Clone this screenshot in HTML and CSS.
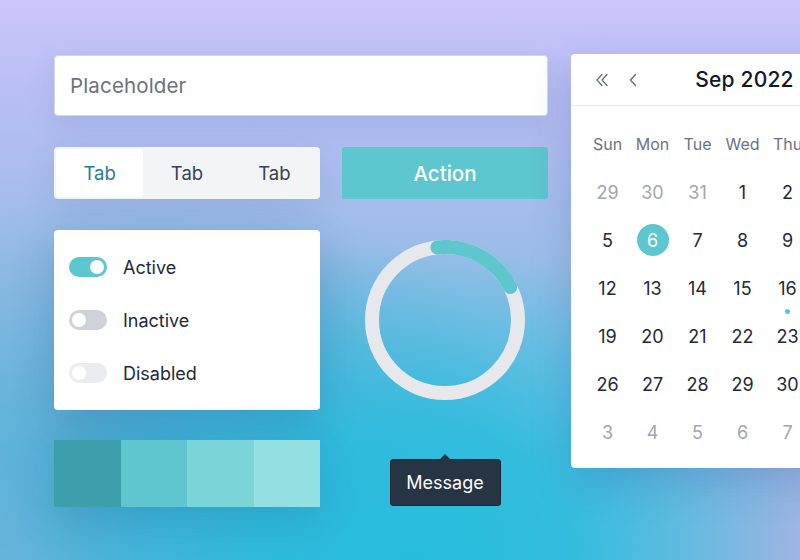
FILE: index.html
```html
<!DOCTYPE html>
<html>
<head>
<meta charset="utf-8">
<link rel="stylesheet" href="styles.css">
</head>
<body>
<div class="stage">
  <div class="left">
    <div class="input"><span class="placeholder">Placeholder</span></div>
    <div class="tabs">
      <div class="tab active">Tab</div>
      <div class="tab">Tab</div>
      <div class="tab">Tab</div>
    </div>
    <div class="button">Action</div>
    <div class="card toggles">
      <div class="toggle-row"><span class="switch on"><span class="knob"></span></span><span class="label">Active</span></div>
      <div class="toggle-row"><span class="switch off"><span class="knob"></span></span><span class="label">Inactive</span></div>
      <div class="toggle-row"><span class="switch disabled"><span class="knob"></span></span><span class="label">Disabled</span></div>
    </div>
    <div class="ring-wrap">
      <svg width="160" height="160" viewBox="0 0 160 160">
        <circle cx="80" cy="80" r="73" fill="none" stroke="#e6e8ec" stroke-width="14"/>
        <circle cx="80" cy="80" r="73" fill="none" stroke="#5ec6ce" stroke-width="14" stroke-linecap="round" stroke-dasharray="88 460" transform="rotate(-96 80 80)"/>
      </svg>
    </div>
    <div class="swatches">
      <div class="swatch s1"></div>
      <div class="swatch s2"></div>
      <div class="swatch s3"></div>
      <div class="swatch s4"></div>
    </div>
    <div class="tip-wrap">
      <div class="tooltip">Message</div>
    </div>
  </div>
  <div class="calendar">
    <div class="cal-head">
      <div class="nav">
        <svg width="14" height="14" viewBox="0 0 14 14"><path d="M7 1.5 L2 7 L7 12.5 M12 1.5 L7 7 L12 12.5" fill="none" stroke="#6b7280" stroke-width="1.4" stroke-linecap="round" stroke-linejoin="round"/></svg>
        <svg width="14" height="14" viewBox="0 0 14 14"><path d="M9.5 1.5 L4.5 7 L9.5 12.5" fill="none" stroke="#6b7280" stroke-width="1.4" stroke-linecap="round" stroke-linejoin="round"/></svg>
      </div>
      <div class="title">Sep 2022</div>
    </div>
    <div class="cal-grid">
      <div class="wd">Sun</div><div class="wd">Mon</div><div class="wd">Tue</div><div class="wd">Wed</div><div class="wd">Thu</div><div class="wd">Fri</div><div class="wd">Sat</div>
      <div class="d muted">29</div><div class="d muted">30</div><div class="d muted">31</div><div class="d">1</div><div class="d">2</div><div class="d">3</div><div class="d">4</div>
      <div class="d">5</div><div class="d"><span class="sel">6</span></div><div class="d">7</div><div class="d">8</div><div class="d">9</div><div class="d">10</div><div class="d">11</div>
      <div class="d">12</div><div class="d">13</div><div class="d">14</div><div class="d">15</div><div class="d dot">16</div><div class="d">17</div><div class="d">18</div>
      <div class="d">19</div><div class="d">20</div><div class="d">21</div><div class="d">22</div><div class="d">23</div><div class="d">24</div><div class="d">25</div>
      <div class="d">26</div><div class="d">27</div><div class="d">28</div><div class="d">29</div><div class="d">30</div><div class="d muted">1</div><div class="d muted">2</div>
      <div class="d muted">3</div><div class="d muted">4</div><div class="d muted">5</div><div class="d muted">6</div><div class="d muted">7</div><div class="d muted">8</div><div class="d muted">9</div>
    </div>
  </div>
</div>
</body>
</html>
```

FILE: styles.css
```css
html, body {
  margin: 0;
  padding: 0;
  width: 800px;
  height: 560px;
  overflow: hidden;
}
body {
  font-family: Inter, "Noto Sans", sans-serif;
  color: #1f2937;
  background:
    radial-gradient(ellipse 400px 320px at 52% 100%, #27bcdc 0%, rgba(39,188,220,0.85) 40%, rgba(39,188,220,0) 100%),
    radial-gradient(ellipse 380px 300px at 20% 85%, rgba(40,150,190,0.55) 0%, rgba(40,150,190,0) 100%),
    radial-gradient(ellipse 260px 260px at 100% 100%, rgba(172,178,226,0.95) 0%, rgba(172,178,226,0) 100%),
    linear-gradient(180deg, #cbc5fb 0%, #b3bdf0 22%, #98bde6 50%, #78c0e6 80%, #80c0e8 100%);
}
.stage {
  display: flex;
  gap: 23px;
  padding: 54px 0 0 54px;
}
.left {
  display: grid;
  grid-template-columns: 266px 206px;
  column-gap: 22px;
  grid-template-rows: 61px 52px 180px 66px;
  row-gap: 31px;
  width: 494px;
  flex: none;
  margin-top: 1px;
}
.input {
  grid-column: 1 / 3;
  background: #fff;
  border: 1px solid #d4d7dd;
  border-radius: 4px;
  box-sizing: border-box;
  display: flex;
  align-items: center;
  padding-left: 15px;
  box-shadow: 0 10px 30px rgba(60,80,160,0.12);
}
.placeholder {
  font-size: 20.5px;
  color: #6b7280;
  letter-spacing: 0.15px;
}
.tabs {
  display: flex;
  background: #f2f4f6;
  border-radius: 4px;
  padding: 2px;
  box-sizing: border-box;
  box-shadow: 0 10px 30px rgba(60,80,160,0.12);
}
.tab {
  flex: 1;
  display: flex;
  align-items: center;
  justify-content: center;
  font-size: 18.5px;
  color: #374151;
  border-radius: 3px;
}
.tab.active {
  background: #fff;
  color: #2b7a96;
}
.button {
  background: #5ec6ce;
  border-radius: 3px;
  display: flex;
  align-items: center;
  justify-content: center;
  color: #fff;
  font-size: 20.5px;
  font-weight: 500;
}
.card {
  background: #fff;
  border-radius: 4px;
  box-shadow: 0 14px 40px rgba(20,70,130,0.22);
}
.toggles {
  display: flex;
  flex-direction: column;
  gap: 31px;
  padding: 26px 15px;
  box-sizing: border-box;
}
.toggle-row {
  display: flex;
  align-items: center;
  gap: 16px;
  height: 22px;
}
.label {
  font-size: 18px;
  color: #1f2937;
}
.switch {
  width: 38px;
  height: 20px;
  border-radius: 10px;
  display: flex;
  align-items: center;
  padding: 0 3px;
  box-sizing: border-box;
}
.knob {
  width: 14px;
  height: 14px;
  border-radius: 50%;
  background: #fff;
}
.switch.on { background: #5ec6ce; justify-content: flex-end; }
.switch.off { background: #cfd2d8; }
.switch.disabled { background: #ebecef; }
.ring-wrap {
  display: flex;
  align-items: center;
  justify-content: center;
}
.swatches {
  display: flex;
  margin-top: -1px;
  box-shadow: 0 14px 40px rgba(20,70,130,0.18);
}
.swatch { flex: 1; }
.s1 { background: #3d9fab; }
.s2 { background: #5fc6cf; }
.s3 { background: #7bd5d8; }
.s4 { background: #93e0e3; }
.tip-wrap {
  display: flex;
  align-items: flex-end;
  justify-content: center;
  margin-top: -1px;
  margin-bottom: 1px;
}
.tooltip {
  position: relative;
  background: #273444;
  color: #fff;
  font-size: 18px;
  border-radius: 3px;
  width: 111px;
  height: 47px;
  display: flex;
  align-items: center;
  justify-content: center;
  border: 1px solid #1c2633;
  box-sizing: border-box;
}
.tooltip::before {
  content: "";
  position: absolute;
  top: -6px;
  left: 50%;
  margin-left: -6px;
  border-left: 6px solid transparent;
  border-right: 6px solid transparent;
  border-bottom: 6px solid #273444;
}
.calendar {
  flex: none;
  width: 343px;
  height: 414px;
  background: #fff;
  border-radius: 4px;
  box-shadow: 0 14px 40px rgba(40,70,150,0.22);
  display: flex;
  flex-direction: column;
}
.cal-head {
  position: relative;
  height: 51px;
  border-bottom: 1px solid #e6e8ec;
  display: flex;
  align-items: center;
  justify-content: center;
  flex: none;
}
.nav {
  position: absolute;
  left: 24px;
  top: 19px;
  display: flex;
  gap: 17px;
}
.title {
  font-size: 21px;
  font-weight: 450;
  color: #111827;
  margin-left: 4px;
  letter-spacing: 0.2px;
}
.cal-grid {
  display: grid;
  grid-template-columns: repeat(7, 45px);
  grid-auto-rows: 48px;
  padding: 14px 14px 0 14px;
}
.wd {
  display: flex;
  align-items: center;
  justify-content: center;
  font-size: 16px;
  color: #6b7280;
}
.d {
  position: relative;
  display: flex;
  align-items: center;
  justify-content: center;
  font-size: 18px;
  color: #1f2937;
}
.d.muted { color: #a1a6ae; }
.sel {
  width: 32px;
  height: 32px;
  border-radius: 50%;
  background: #5ec6ce;
  color: #fff;
  display: flex;
  align-items: center;
  justify-content: center;
}
.d.dot::after {
  content: "";
  position: absolute;
  width: 5px;
  height: 5px;
  border-radius: 50%;
  background: #5ec6ce;
  left: 50%;
  margin-left: -2.5px;
  top: 45px;
}
```
